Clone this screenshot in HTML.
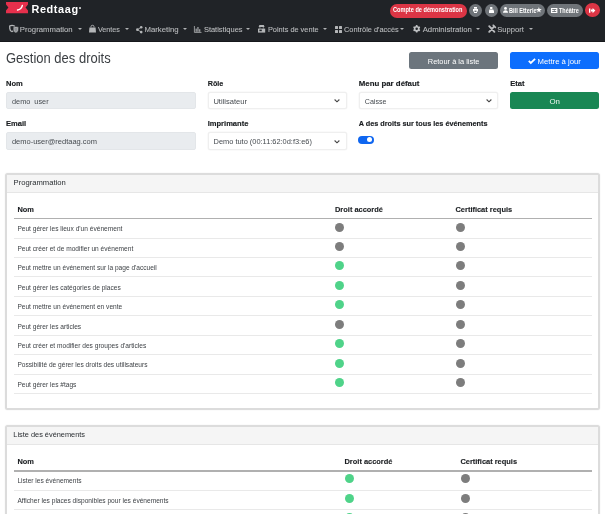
<!DOCTYPE html>
<html><head><meta charset="utf-8">
<style>
*{box-sizing:border-box;margin:0;padding:0}
html,body{width:605px;height:514px;overflow:hidden;background:#fff}
.wrap{position:absolute;left:0;top:0;width:605px;height:514px;will-change:transform}
body{font-family:"Liberation Sans",sans-serif;color:#212529;position:relative}
.abs{position:absolute}
.nav{position:absolute;left:0;top:0;width:605px;height:41.7px;background:#202327;border-bottom:1px solid #16181b}
.t{position:absolute;white-space:pre;line-height:1}
.navi{color:#b9bbbd;-webkit-text-stroke:0.1px #b9bbbd}
.caret{position:absolute;width:0;height:0;border-left:2.2px solid transparent;border-right:2.2px solid transparent;border-top:2.5px solid #b0b2b4;margin-top:-0.7px}
.pill{position:absolute;border-radius:8px;background:#6c757d}
.ptx{position:absolute;white-space:pre;line-height:1;color:#fff;font-weight:700}
.lbl{font-weight:700;color:#1a1d20;-webkit-text-stroke:0.15px #1a1d20}
.inp{position:absolute;border-radius:2px}
.dis{background:#e9ecef;border:0.6px solid #e3e6e9}
.sel{background:#fff;border:1px solid #efefef;box-shadow:0 0 0 0.5px #f6f6f6}
.itx{color:#464b50}
.btn{position:absolute;border-radius:2.5px}
.card{position:absolute;left:4.9px;width:594.9px;border:2px solid #dcdcdc;border-radius:2.5px;background:#fff;box-shadow:0 0 2px rgba(0,0,0,.07)}
.ch{height:18px;background:#f5f5f5;border-bottom:1px solid #e6e6e6}
.td{font-size:6.6px;color:#3f4347}
.th{font-weight:700;font-size:7.45px;color:#1a1d20;-webkit-text-stroke:0.12px #1a1d20}
.dot{position:absolute;width:9px;height:9px;border-radius:50%}
.g{background:#7d7d7d}
.ok{background:#4fd389}
svg{position:absolute;overflow:visible}
</style></head><body><div class="wrap">
<div class="nav">
  <!-- logo -->
  <svg style="left:6px;top:2px" width="22" height="11.2" viewBox="0 0 22 11.2">
    <path d="M0 0 H22 V2.6 L19.6 5.6 L22 8.6 V11.2 H0 V8.6 L2.4 5.6 L0 2.6 Z" fill="#e6304c"/>
    <path d="M11.6 8.1 Q15.5 7.2 16.3 3.6" stroke="#fff" stroke-width="1.5" fill="none" stroke-linecap="round"/>
  </svg>
  <div class="t" style="left:31.4px;top:4.3px;font-size:10.9px;font-weight:700;color:#fff;letter-spacing:0.62px">Redtaag</div>
  <div class="abs" style="left:79px;top:7px;width:1.7px;height:1.7px;border-radius:50%;background:#ccc"></div>

  <!-- top right pills -->
  <div class="pill" style="left:390px;top:3.7px;width:77.3px;height:14.2px;background:#dc3545"></div>
  <div class="ptx" style="left:392.9px;top:7.3px;font-size:6.5px;transform:scaleX(0.862);transform-origin:0 0">Compte de démonstration</div>

  <div class="pill" style="left:469.2px;top:3.8px;width:13.2px;height:13.2px;background:#6f7479"></div>
  <svg style="left:473.4px;top:7.3px" width="5" height="6" viewBox="0 0 5 6">
    <path d="M1 0 H4 V1.8 H1 Z M0 2 H5 V4.6 H4 V6 H1 V4.6 H0 Z" fill="#fff"/>
    <rect x="1.5" y="3.6" width="2" height="1.4" fill="#6f7479"/>
  </svg>
  <div class="pill" style="left:484.5px;top:3.8px;width:13.2px;height:13.2px;background:#6f7479"></div>
  <svg style="left:488.6px;top:7.2px" width="5" height="6" viewBox="0 0 5 6">
    <path d="M1.1 0 H3.4 V1.9 H1.1 Z M0.3 2.5 H4.4 V3.4 H5 V6 H0 V3.4 H0.3 Z" fill="#fff"/>
  </svg>

  <div class="pill" style="left:499.7px;top:3.7px;width:45.3px;height:13.3px;background:#6f7479"></div>
  <svg style="left:503.2px;top:7.2px" width="5" height="5.8" viewBox="0 0 5 5.8">
    <circle cx="2.5" cy="1.4" r="1.4" fill="#fff"/>
    <path d="M0 5.8 Q0 3.2 2.5 3.2 Q5 3.2 5 5.8 Z" fill="#fff"/>
  </svg>
  <div class="ptx" style="left:508.7px;top:7.8px;font-size:6.4px;transform:scaleX(0.875);transform-origin:0 0">Bill Etterie</div>
  <svg style="left:535.9px;top:6.8px" width="5.8" height="5.8" viewBox="0 0 10 10">
    <path d="M5 0 L6.2 3.5 L10 3.6 L7 5.9 L8.1 9.6 L5 7.4 L1.9 9.6 L3 5.9 L0 3.6 L3.8 3.5 Z" fill="#fff"/>
  </svg>

  <div class="pill" style="left:547px;top:4px;width:36.2px;height:12.6px;background:#6f7479"></div>
  <svg style="left:550.8px;top:7.6px" width="6.4" height="5" viewBox="0 0 6.4 5">
    <rect x="0" y="0" width="6.4" height="5" fill="#fff"/>
    <rect x="1.2" y="1" width="4" height="0.9" fill="#6f7479"/>
    <rect x="1.2" y="3.1" width="4" height="0.9" fill="#6f7479"/>
    <rect x="2.9" y="1" width="0.7" height="3" fill="#6f7479"/>
  </svg>
  <div class="ptx" style="left:558.9px;top:7.7px;font-size:6.3px;transform:scaleX(0.87);transform-origin:0 0">Théâtre</div>

  <div class="pill" style="left:585.1px;top:3.4px;width:14.5px;height:13.6px;background:#dc3545;border-radius:50%"></div>
  <svg style="left:588.7px;top:7.8px" width="6.4" height="5.2" viewBox="0 0 6.4 5.2">
    <path d="M0 0.4 H1.4 V4.8 H0 Z M2 1.6 H3.6 V0 L6.4 2.6 L3.6 5.2 V3.6 H2 Z" fill="#fff"/>
  </svg>

  <!-- nav icons -->
  <svg style="left:9px;top:25px" width="10" height="8" viewBox="0 0 10 8">
    <path d="M0.7 1 Q3 -0.1 5.4 1 L5.3 3.6 Q5 6.2 3 6.6 Q1 6.2 0.8 3.6 Z" fill="none" stroke="#b4b6b8" stroke-width="1.3"/>
    <path d="M4.1 2.1 Q6.9 0.9 9.7 2.1 L9.5 5 Q9.1 7.8 6.9 8.1 Q4.7 7.8 4.3 5 Z" fill="#b4b6b8" stroke="#202327" stroke-width="0.6"/>
    <path d="M5.3 3.2 Q6.9 2.5 8.5 3.2 L8.4 5 Q8.1 6.8 6.9 6.9 Q5.7 6.8 5.4 5 Z" fill="#8d9094"/>
  </svg>
  <div class="t navi" style="left:19.8px;top:26px;font-size:7.74px">Programmation</div>
  <div class="caret" style="left:77.6px;top:28.6px"></div>

  <svg style="left:89px;top:25px" width="7" height="7.4" viewBox="0 0 7 7.4">
    <path d="M2 2.4 V1.6 Q2 0.3 3.5 0.3 Q5 0.3 5 1.6 V2.4" stroke="#b4b6b8" stroke-width="0.9" fill="none"/>
    <path d="M0.4 2.4 H6.6 L7 7.4 H0 Z" fill="#b4b6b8"/>
  </svg>
  <div class="t navi" style="left:97.9px;top:26.3px;font-size:7.2px">Ventes</div>
  <div class="caret" style="left:124.5px;top:28.6px"></div>

  <svg style="left:136px;top:25.5px" width="6.6" height="7.4" viewBox="0 0 6.6 7.4">
    <path d="M5.2 1.3 L1.4 3.7 L5.2 6.1" stroke="#b4b6b8" stroke-width="0.8" fill="none"/>
    <circle cx="5.2" cy="1.3" r="1.3" fill="#b4b6b8"/><circle cx="1.4" cy="3.7" r="1.35" fill="#b4b6b8"/><circle cx="5.2" cy="6.1" r="1.3" fill="#b4b6b8"/>
  </svg>
  <div class="t navi" style="left:144.5px;top:26px;font-size:7.77px">Marketing</div>
  <div class="caret" style="left:183px;top:28.6px"></div>

  <svg style="left:194.4px;top:25.8px" width="7.5" height="6.8" viewBox="0 0 7.5 6.8">
    <path d="M0.4 0 V6.4 H7.5" stroke="#b4b6b8" stroke-width="0.8" fill="none"/>
    <rect x="1.6" y="2.6" width="1.1" height="3.2" fill="#b4b6b8"/><rect x="3.4" y="1" width="1.1" height="4.8" fill="#b4b6b8"/><rect x="5.2" y="3.2" width="1.1" height="2.6" fill="#b4b6b8"/>
  </svg>
  <div class="t navi" style="left:203.9px;top:26px;font-size:7.49px">Statistiques</div>
  <div class="caret" style="left:246.4px;top:28.6px"></div>

  <svg style="left:258px;top:25.2px" width="7.2" height="7.6" viewBox="0 0 7.2 7.6">
    <path d="M1.4 0 H5.8 L6.6 2 H0.6 Z" fill="#b4b6b8"/>
    <rect x="1.4" y="2.4" width="1" height="1" fill="#b4b6b8"/><rect x="4.8" y="2.4" width="1" height="1" fill="#b4b6b8"/>
    <path d="M0 3.6 H7.2 V7.6 H0 Z" fill="#b4b6b8"/>
    <rect x="1.4" y="4.6" width="2.4" height="1.6" fill="#212529"/>
  </svg>
  <div class="t navi" style="left:267.9px;top:26px;font-size:7.37px">Points de vente</div>
  <div class="caret" style="left:323.4px;top:28.6px"></div>

  <svg style="left:335.2px;top:25.8px" width="7" height="7" viewBox="0 0 7 7">
    <rect x="0" y="0" width="3" height="3" rx="0.5" fill="#b4b6b8"/><rect x="4" y="0" width="3" height="3" rx="0.5" fill="#b4b6b8"/>
    <rect x="0" y="4" width="3" height="3" rx="0.5" fill="#b4b6b8"/><rect x="4" y="4" width="3" height="3" rx="0.5" fill="#b4b6b8"/>
  </svg>
  <div class="t navi" style="left:344px;top:26px;font-size:7.4px">Contrôle d'accès</div>
  <div class="caret" style="left:400.3px;top:28.6px"></div>

  <svg style="left:413px;top:25.3px" width="7.4" height="7.6" viewBox="-3.7 -3.8 7.4 7.6">
    <g fill="#bfc1c3">
      <circle r="2.9"/>
      <rect x="-0.8" y="-3.7" width="1.6" height="7.4" rx="0.3"/>
      <rect x="-0.8" y="-3.7" width="1.6" height="7.4" rx="0.3" transform="rotate(60)"/>
      <rect x="-0.8" y="-3.7" width="1.6" height="7.4" rx="0.3" transform="rotate(120)"/>
    </g>
    <circle r="1.25" fill="#212529"/>
  </svg>
  <div class="t navi" style="left:422.7px;top:26px;font-size:7.75px">Administration</div>
  <div class="caret" style="left:476.3px;top:28.6px"></div>

  <svg style="left:487.6px;top:25px" width="7.6" height="8" viewBox="0 0 7.6 8">
    <path d="M1.2 1.2 L6.4 6.8 M6.2 1.4 L1.2 6.8" stroke="#b8babc" stroke-width="1.9" stroke-linecap="round"/>
    <path d="M5.2 0.2 L7.4 2.4" stroke="#b8babc" stroke-width="1.6" stroke-linecap="round"/>
  </svg>
  <div class="t navi" style="left:497.2px;top:26px;font-size:7.6px">Support</div>
  <div class="caret" style="left:528.6px;top:28.6px"></div>
</div>

<!-- heading -->
<div class="t" style="left:6px;top:51.8px;font-size:13.9px;color:#3a3e42;transform:scaleX(0.935);transform-origin:0 0">Gestion des droits</div>
<div class="btn" style="left:409px;top:52px;width:89.2px;height:17px;background:#6c757d"></div>
<div class="t" style="left:427.8px;top:57.6px;font-size:7.43px;color:#fff">Retour à la liste</div>
<div class="btn" style="left:510px;top:51.8px;width:89.2px;height:17.2px;background:#0d6efd"></div>
<svg style="left:528.2px;top:57.9px" width="7.8" height="5.8" viewBox="0 0 7.8 5.8">
  <path d="M0.8 2.9 L2.8 4.9 L7.1 0.8" stroke="#fff" stroke-width="1.8" fill="none"/>
</svg>
<div class="t" style="left:537.6px;top:57.5px;font-size:7.73px;color:#fff">Mettre à jour</div>

<!-- form row 1 -->
<div class="t lbl" style="left:6px;top:79.6px;font-size:7.56px">Nom</div>
<div class="t lbl" style="left:207.7px;top:79.6px;font-size:7.2px">Rôle</div>
<div class="t lbl" style="left:358.8px;top:79.6px;font-size:7.85px">Menu par défaut</div>
<div class="t lbl" style="left:510.2px;top:80.1px;font-size:7.56px">Etat</div>
<div class="inp dis" style="left:5.7px;top:92px;width:190px;height:17.4px"></div>
<div class="t itx" style="left:12px;top:97.8px;font-size:7.32px">demo  user</div>
<div class="inp sel" style="left:207.6px;top:92.3px;width:139.6px;height:17.2px"></div>
<div class="t itx" style="left:213.4px;top:97.9px;font-size:7.55px">Utilisateur</div>
<svg style="left:334.3px;top:99.3px" width="6" height="3.4" viewBox="0 0 6 3.4">
  <path d="M0.6 0.5 L3 2.8 L5.4 0.5" stroke="#4a4a4a" stroke-width="1.15" fill="none"/>
</svg>
<div class="inp sel" style="left:359px;top:92.3px;width:139.3px;height:17.2px"></div>
<div class="t itx" style="left:364.8px;top:98.5px;font-size:7.1px">Caisse</div>
<svg style="left:485.7px;top:99.3px" width="6" height="3.4" viewBox="0 0 6 3.4">
  <path d="M0.6 0.5 L3 2.8 L5.4 0.5" stroke="#4a4a4a" stroke-width="1.15" fill="none"/>
</svg>
<div class="btn" style="left:510.2px;top:92.1px;width:89px;height:17.1px;background:#198754"></div>
<div class="t" style="left:549.4px;top:97.5px;font-size:7.9px;color:#eef7f1">On</div>

<!-- form row 2 -->
<div class="t lbl" style="left:6px;top:119.6px;font-size:7.56px">Email</div>
<div class="t lbl" style="left:207.7px;top:119.6px;font-size:7.56px">Imprimante</div>
<div class="t lbl" style="left:358.7px;top:119.8px;font-size:7.29px">A des droits sur tous les événements</div>
<div class="inp dis" style="left:5.7px;top:132.2px;width:190px;height:17.4px"></div>
<div class="t itx" style="left:11.9px;top:137.9px;font-size:7.51px">demo-user@redtaag.com</div>
<div class="inp sel" style="left:207.6px;top:132.3px;width:139.6px;height:17.3px"></div>
<div class="t itx" style="left:213.6px;top:138px;font-size:7.42px">Demo tuto (00:11:62:0d:f3:e6)</div>
<svg style="left:334.3px;top:139.5px" width="6" height="3.4" viewBox="0 0 6 3.4">
  <path d="M0.6 0.5 L3 2.8 L5.4 0.5" stroke="#4a4a4a" stroke-width="1.15" fill="none"/>
</svg>
<div class="abs" style="left:358.4px;top:135.9px;width:15.4px;height:7.7px;border-radius:4px;background:#0f66f0"></div>
<div class="abs" style="left:367.1px;top:137.1px;width:5.4px;height:5.4px;border-radius:50%;background:#fff"></div>

<!-- card 1 -->
<div class="card" style="top:172.6px;height:237px">
  <div class="ch"></div>
</div>
<div class="t" style="left:13.6px;top:179.1px;font-size:7.64px;color:#2a2e32">Programmation</div>

<!-- card 2 -->
<div class="card" style="top:424.8px;height:120px">
  <div class="ch"></div>
</div>
<div class="t" style="left:13.3px;top:431px;font-size:7.38px;color:#2a2e32">Liste des événements</div>

<div class="t th" style="left:17.4px;top:205.70px">Nom</div>
<div class="t th" style="left:335.0px;top:205.70px">Droit accordé</div>
<div class="t th" style="left:455.5px;top:205.70px">Certificat requis</div>
<div class="abs" style="left:13.5px;top:217.90px;width:578.5px;height:1.5px;background:#b0b0b0"></div>
<div class="t td" style="left:17.4px;top:226.25px">Peut gérer les lieux d'un événement</div>
<div class="dot g" style="left:335.20px;top:222.50px"></div>
<div class="dot g" style="left:456.10px;top:222.50px"></div>
<div class="abs" style="left:13.5px;top:237.50px;width:578.5px;height:0.7px;background:#e9e9e9"></div>
<div class="t td" style="left:17.4px;top:245.70px">Peut créer et de modifier un événement</div>
<div class="dot g" style="left:335.20px;top:241.95px"></div>
<div class="dot g" style="left:456.10px;top:241.95px"></div>
<div class="abs" style="left:13.5px;top:256.95px;width:578.5px;height:0.7px;background:#e9e9e9"></div>
<div class="t td" style="left:17.4px;top:265.15px">Peut mettre un événement sur la page d'accueil</div>
<div class="dot ok" style="left:335.20px;top:261.40px"></div>
<div class="dot g" style="left:456.10px;top:261.40px"></div>
<div class="abs" style="left:13.5px;top:276.40px;width:578.5px;height:0.7px;background:#e9e9e9"></div>
<div class="t td" style="left:17.4px;top:284.60px">Peut gérer les catégories de places</div>
<div class="dot ok" style="left:335.20px;top:280.85px"></div>
<div class="dot g" style="left:456.10px;top:280.85px"></div>
<div class="abs" style="left:13.5px;top:295.85px;width:578.5px;height:0.7px;background:#e9e9e9"></div>
<div class="t td" style="left:17.4px;top:304.05px">Peut mettre un événement en vente</div>
<div class="dot ok" style="left:335.20px;top:300.30px"></div>
<div class="dot g" style="left:456.10px;top:300.30px"></div>
<div class="abs" style="left:13.5px;top:315.30px;width:578.5px;height:0.7px;background:#e9e9e9"></div>
<div class="t td" style="left:17.4px;top:323.50px">Peut gérer les articles</div>
<div class="dot g" style="left:335.20px;top:319.75px"></div>
<div class="dot g" style="left:456.10px;top:319.75px"></div>
<div class="abs" style="left:13.5px;top:334.75px;width:578.5px;height:0.7px;background:#e9e9e9"></div>
<div class="t td" style="left:17.4px;top:342.95px">Peut créer et modifier des groupes d'articles</div>
<div class="dot ok" style="left:335.20px;top:339.20px"></div>
<div class="dot g" style="left:456.10px;top:339.20px"></div>
<div class="abs" style="left:13.5px;top:354.20px;width:578.5px;height:0.7px;background:#e9e9e9"></div>
<div class="t td" style="left:17.4px;top:362.40px">Possibilité de gérer les droits des utilisateurs</div>
<div class="dot ok" style="left:335.20px;top:358.65px"></div>
<div class="dot g" style="left:456.10px;top:358.65px"></div>
<div class="abs" style="left:13.5px;top:373.65px;width:578.5px;height:0.7px;background:#e9e9e9"></div>
<div class="t td" style="left:17.4px;top:381.85px">Peut gérer les #tags</div>
<div class="dot ok" style="left:335.20px;top:378.10px"></div>
<div class="dot g" style="left:456.10px;top:378.10px"></div>
<div class="abs" style="left:13.5px;top:393.10px;width:578.5px;height:0.7px;background:#e9e9e9"></div>
<div class="t th" style="left:17.4px;top:457.90px">Nom</div>
<div class="t th" style="left:344.5px;top:457.90px">Droit accordé</div>
<div class="t th" style="left:460.4px;top:457.90px">Certificat requis</div>
<div class="abs" style="left:13.5px;top:470.10px;width:578.5px;height:1.5px;background:#b0b0b0"></div>
<div class="t td" style="left:17.4px;top:478.45px">Lister les événements</div>
<div class="dot ok" style="left:344.70px;top:474.35px"></div>
<div class="dot g" style="left:461.00px;top:474.35px"></div>
<div class="abs" style="left:13.5px;top:489.55px;width:578.5px;height:0.7px;background:#e9e9e9"></div>
<div class="t td" style="left:17.4px;top:497.75px">Afficher les places disponibles pour les événements</div>
<div class="dot ok" style="left:344.70px;top:493.65px"></div>
<div class="dot g" style="left:461.00px;top:493.65px"></div>
<div class="abs" style="left:13.5px;top:508.85px;width:578.5px;height:0.7px;background:#e9e9e9"></div>
<div class="dot ok" style="left:344.70px;top:512.95px"></div>
<div class="dot g" style="left:461.00px;top:512.95px"></div>
<div class="abs" style="left:13.5px;top:528.15px;width:578.5px;height:0.7px;background:#e9e9e9"></div>
</div></body></html>
